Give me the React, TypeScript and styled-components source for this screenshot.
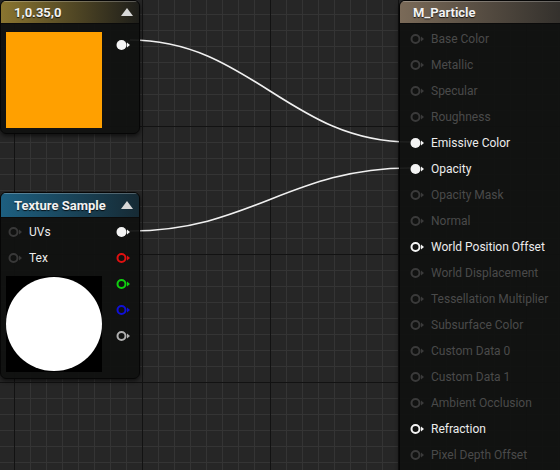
import React from "react";
import styled, { createGlobalStyle } from "styled-components";

const Global = createGlobalStyle`
  html, body { margin: 0; padding: 0; background: #262626; }
  body { font-family: Roboto, "Noto Sans", "DejaVu Sans", sans-serif; }
`;

const Canvas = styled.div`
  position: relative;
  width: 560px;
  height: 470px;
  overflow: hidden;
  background-color: #262626;
  background-image:
    linear-gradient(to right, #121212 0 1px, transparent 1px),
    linear-gradient(to bottom, #121212 0 1px, transparent 1px),
    linear-gradient(to right, #343434 0 1px, transparent 1px),
    linear-gradient(to bottom, #343434 0 1px, transparent 1px);
  background-size: 128px 128px, 128px 128px, 16px 16px, 16px 16px;
  background-position: 14px 0, 0 126px, 14px 0, 0 14px;
`;

const Node = styled.div<{ $x: number; $y: number; $w: number; $h: number }>`
  position: absolute;
  left: ${(p) => p.$x}px;
  top: ${(p) => p.$y}px;
  width: ${(p) => p.$w}px;
  height: ${(p) => p.$h}px;
  box-sizing: border-box;
  border-radius: 6px;
  background: rgba(16, 17, 16, 0.94);
  border: 1px solid #060606;
  box-shadow: 0 2px 4px rgba(0, 0, 0, 0.6);
  display: flex;
  flex-direction: column;
  overflow: hidden;
`;

const Header = styled.div<{ $c1: string; $c2: string; $h: number }>`
  height: ${(p) => p.$h}px;
  flex: none;
  display: flex;
  align-items: center;
  justify-content: space-between;
  padding: 0 6px 0 13px;
  background: linear-gradient(to right, ${(p) => p.$c1} 0%, ${(p) => p.$c2} 100%);
  box-shadow: inset 0 1px 0 rgba(255, 255, 255, 0.25);
  border-bottom: 1px solid #0b0b0b;
  color: #f2f2f2;
  font-weight: 700;
  font-size: 13px;
  text-shadow: 0 1px 1px rgba(0, 0, 0, 0.8);
`;

const Collapse = styled.div`
  width: 0;
  height: 0;
  border-left: 6px solid transparent;
  border-right: 6px solid transparent;
  border-bottom: 8px solid #d8d8d8;
  margin-top: -1px;
`;

const ConstBody = styled.div`
  display: flex;
  padding: 8px 0 0 5px;
  gap: 14px;
`;

const Swatch = styled.div<{ $c: string }>`
  width: 96px;
  height: 96px;
  background: ${(p) => p.$c};
  flex: none;
`;

const PinColumn = styled.div`
  display: flex;
  flex-direction: column;
`;

const PinRow = styled.div<{ $gap?: number }>`
  height: 26px;
  display: flex;
  align-items: center;
  gap: ${(p) => p.$gap ?? 5}px;
`;

const Label = styled.span<{ $on: boolean }>`
  font-size: 12px;
  color: ${(p) => (p.$on ? "#ececec" : "#4a4a4a")};
  white-space: nowrap;
`;

const TexBody = styled.div`
  display: flex;
  padding: 1px 0 0 5px;
  gap: 14px;
`;

const InputsCol = styled.div`
  display: flex;
  flex-direction: column;
`;

const InputRow = styled.div`
  height: 26px;
  display: flex;
  align-items: center;
  gap: 6px;
  padding-left: 2px;
`;

const Preview = styled.div`
  width: 96px;
  height: 96px;
  background: #000;
  margin-top: 5px;
  display: flex;
  align-items: center;
  justify-content: center;
`;

const Disc = styled.div`
  width: 96px;
  height: 94px;
  border-radius: 50%;
  background: #fff;
  filter: blur(0.4px);
`;

const MatBody = styled.div`
  display: flex;
  flex-direction: column;
  padding: 2px 0 0 10px;
`;

const Wires = styled.svg`
  position: absolute;
  left: 0;
  top: 0;
  pointer-events: none;
`;

type PinKind = "filled" | "ring" | "dim";

function Pin({ kind, color }: { kind: PinKind; color?: string }) {
  const c = color ?? (kind === "dim" ? "#3a3a3a" : "#f4f4f4");
  return (
    <svg width="15" height="12" viewBox="0 0 15 12">
      {kind === "filled" ? (
        <circle cx="5.5" cy="6" r="5" fill={c} />
      ) : (
        <circle cx="5.5" cy="6" r="4" fill="none" stroke={c} strokeWidth="2" />
      )}
      <path d="M11 3.5 L14 6 L11 8.5 Z" fill={c} />
    </svg>
  );
}

const matInputs: { label: string; kind: PinKind }[] = [
  { label: "Base Color", kind: "dim" },
  { label: "Metallic", kind: "dim" },
  { label: "Specular", kind: "dim" },
  { label: "Roughness", kind: "dim" },
  { label: "Emissive Color", kind: "filled" },
  { label: "Opacity", kind: "filled" },
  { label: "Opacity Mask", kind: "dim" },
  { label: "Normal", kind: "dim" },
  { label: "World Position Offset", kind: "ring" },
  { label: "World Displacement", kind: "dim" },
  { label: "Tessellation Multiplier", kind: "dim" },
  { label: "Subsurface Color", kind: "dim" },
  { label: "Custom Data 0", kind: "dim" },
  { label: "Custom Data 1", kind: "dim" },
  { label: "Ambient Occlusion", kind: "dim" },
  { label: "Refraction", kind: "ring" },
  { label: "Pixel Depth Offset", kind: "dim" },
];

const texOutputs: { kind: PinKind; color?: string }[] = [
  { kind: "filled" },
  { kind: "ring", color: "#e01010" },
  { kind: "ring", color: "#10d010" },
  { kind: "ring", color: "#1010d8" },
  { kind: "ring", color: "#b0b0b0" },
];

export default function App() {
  return (
    <>
      <Global />
      <Canvas>
        <Wires width="560" height="470">
          <path
            d="M130 40 C 250 40, 290 142, 410 142"
            fill="none"
            stroke="#f0f0f0"
            strokeWidth="1.6"
          />
          <path
            d="M130 231 C 250 231, 290 168, 410 168"
            fill="none"
            stroke="#f0f0f0"
            strokeWidth="1.6"
          />
        </Wires>

        <Node $x={0} $y={0} $w={140} $h={134}>
          <Header $c1="#8a7530" $c2="#1e1e1a" $h={22}>
            <span>1,0.35,0</span>
            <Collapse />
          </Header>
          <ConstBody>
            <Swatch $c="#ffa000" />
            <PinColumn>
              <PinRow>
                <Pin kind="filled" />
              </PinRow>
            </PinColumn>
          </ConstBody>
        </Node>

        <Node $x={0} $y={192} $w={140} $h={187}>
          <Header $c1="#1d5f80" $c2="#162a34" $h={24}>
            <span>Texture Sample</span>
            <Collapse />
          </Header>
          <TexBody>
            <InputsCol>
              <InputRow>
                <Pin kind="ring" color="#383838" />
                <Label $on>UVs</Label>
              </InputRow>
              <InputRow>
                <Pin kind="ring" color="#383838" />
                <Label $on>Tex</Label>
              </InputRow>
              <Preview>
                <Disc />
              </Preview>
            </InputsCol>
            <PinColumn>
              {texOutputs.map((o, i) => (
                <PinRow key={i}>
                  <Pin kind={o.kind} color={o.color} />
                </PinRow>
              ))}
            </PinColumn>
          </TexBody>
        </Node>

        <Node $x={399} $y={0} $w={175} $h={480}>
          <Header $c1="#7a6a58" $c2="#2e2c29" $h={22}>
            <span>M_Particle</span>
          </Header>
          <MatBody>
            {matInputs.map((m) => (
              <PinRow key={m.label} $gap={6}>
                <Pin kind={m.kind} />
                <Label $on={m.kind !== "dim"}>{m.label}</Label>
              </PinRow>
            ))}
          </MatBody>
        </Node>
      </Canvas>
    </>
  );
}
